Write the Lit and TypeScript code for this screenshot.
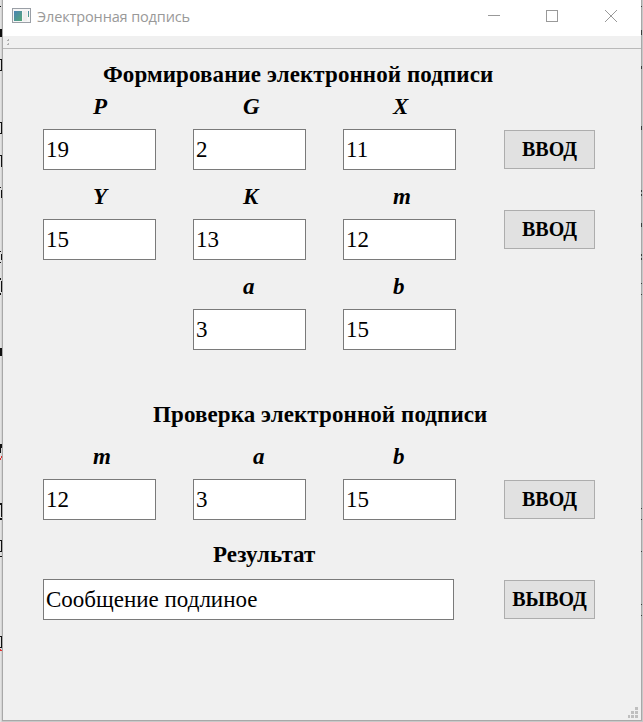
import { LitElement, html, css, svg } from "lit";
import { customElement, property } from "lit/decorators.js";

@customElement("labeled-field")
class LabeledField extends LitElement {
  @property() label = "";
  @property() value = "";

  static styles = css`
    :host { display: block; width: 113px; }
    .label {
      height: 36px; line-height: 35px; margin-bottom: 4px; padding-left: var(--indent, 50px);
      font-weight: bold; font-style: italic; font-size: 23px;
    }
    .box {
      box-sizing: border-box; height: 41px; line-height: 39px; padding-left: 2px;
      border: 1px solid #7a7a7a; background: #fff; font-size: 23px; white-space: nowrap;
    }
  `;

  render() {
    return html`<div class="label">${this.label}</div><div class="box">${this.value}</div>`;
  }
}

@customElement("push-button")
class PushButton extends LitElement {
  static styles = css`
    :host {
      box-sizing: border-box; display: flex; justify-content: center; width: 91px; height: 39px;
      border: 1px solid #adadad; background: #e1e1e1;
      font-weight: bold; font-size: 20px; line-height: 37px; white-space: nowrap;
    }
  `;
  render() {
    return html`<slot></slot>`;
  }
}

@customElement("app-root")
class AppRoot extends LitElement {
  static styles = css`
    :host {
      display: flex; box-sizing: border-box; width: 643px; height: 722px; overflow: hidden;
      background: #c8c8c8; color: #000; font-family: "Liberation Serif", "Times New Roman", serif;
    }
    svg { display: block; }
    .edge { flex: none; }
    .window {
      box-sizing: border-box; position: relative; width: 639px; height: 721px; flex: none;
      border: solid #a8a8a8; border-width: 0 0 1px 1px; background: #f0f0f0;
    }
    .titlebar {
      display: flex; align-items: center; height: 36px; background: #fff; box-sizing: border-box;
      padding: 0 24px 0 9px;
    }
    .title {
      flex: 1; margin-left: 5px; font: 14.5px/33px "Open Sans", "Noto Sans", sans-serif; color: #999;
      height: 36px; letter-spacing: -0.13px;
    }
    .appicon { margin-top: -5px; }
    .controls { margin-top: -4px; }
    .toolbar { height: 12px; border-bottom: 1px solid #b9b9b9; }
    .form { padding: 8px 0 0 40px; }
    h2 { margin: 0; height: 32px; line-height: 35px; font-size: 23px; letter-spacing: 0.1px; white-space: nowrap; }
    .h-sign { padding-left: 60px; }
    .h-check { padding-left: 110px; margin-top: 38px; height: 42px; }
    .h-result { padding-left: 170px; margin-top: 8px; height: 42px; }
    .row { display: grid; grid-template-columns: 150px 150px 161px 91px; height: 90px; }
    .third { grid-column: 2; }
    .wide-indent { --indent: 60px; }
    push-button { margin-top: 41px; }
    .raised { margin-top: 31px; }
    .result { display: grid; grid-template-columns: 461px 91px; }
    .output {
      box-sizing: border-box; width: 411px; height: 41px; line-height: 39px; padding-left: 2px;
      border: 1px solid #7a7a7a; background: #fff; font-size: 23px;
    }
    .result push-button { margin-top: 1px; }
    .grip { position: absolute; right: 3px; bottom: 2px; }
  `;

  private leftEdge() {
    return svg`
      <rect width="2" height="722" fill="#e2e2e2"/>
      <rect x="1" width="1" height="722" fill="#d4d4d4"/>
      <g fill="#111">
        <rect y="6" width="1" height="1"/><rect y="29" width="2" height="8"/>
        <rect y="59" width="2" height="1"/><rect y="70" width="2" height="1"/><rect x="1" y="59" width="1" height="12"/>
        <rect y="122" width="2" height="1"/><rect y="133" width="2" height="1"/><rect x="1" y="122" width="1" height="12"/>
        <rect y="155" width="2" height="1"/><rect x="1" y="155" width="1" height="12"/>
        <rect y="187" width="1" height="1"/><rect x="1" y="190" width="1" height="8"/>
        <rect y="251" width="1" height="1"/><rect x="1" y="254" width="1" height="6"/><rect y="262" width="1" height="1"/>
        <rect y="278" width="1" height="2"/><rect x="1" y="281" width="1" height="11"/><rect y="293" width="1" height="2"/>
        <rect y="348" width="2" height="8"/>
        <rect y="444" width="2" height="4"/><rect y="448" width="1" height="5"/>
        <rect y="503" width="2" height="2"/><rect x="1" y="505" width="1" height="12"/><rect y="518" width="2" height="2"/>
        <rect y="540" width="2" height="1"/><rect x="1" y="541" width="1" height="10"/><rect y="551" width="2" height="1"/><rect y="556" width="2" height="1"/>
        <rect y="636" width="2" height="1"/><rect x="1" y="636" width="1" height="12"/><rect y="647" width="2" height="1"/>
      </g>
      <path d="M0 459.5L2 456.5M0 649.5L2 651" stroke="#e03030" fill="none"/>`;
  }

  private rightEdge() {
    const marks = [[6, 1], [30, 5], [66, 3], [126, 4], [190, 2], [194, 2], [223, 4], [254, 2], [258, 2],
      [283, 1], [294, 1], [508, 1], [519, 1], [551, 1], [604, 1], [615, 1]];
    return svg`
      <rect width="1" height="721" fill="#a8a8a8"/>
      <rect x="1" width="1" height="722" fill="#c8c8c8"/>
      <rect y="721" width="1" height="1" fill="#c8c8c8"/>
      ${marks.map(([y, h]) => svg`<rect y=${y} width="1" height=${h} fill="#3c3c3c"/>`)}`;
  }

  render() {
    return html`
      <svg class="edge" width="2" height="722" shape-rendering="crispEdges">${this.leftEdge()}</svg>
      <div class="window">
        <div class="titlebar">
          <svg class="appicon" width="20" height="16" shape-rendering="crispEdges">
            <defs>
              <linearGradient id="g" x1="0" y1="0" x2="1" y2="1">
                <stop offset="0" stop-color="#4b83b5"/><stop offset="1" stop-color="#55a878"/>
              </linearGradient>
            </defs>
            <rect x="0.5" y="0.5" width="18" height="14" fill="#f6f6f6" stroke="#9a9fa6"/>
            <rect x="2" y="3" width="8" height="10" fill="url(#g)"/>
            <rect x="11" y="3" width="4" height="10" fill="#ededed"/>
            <rect x="16" y="3" width="1" height="6" fill="url(#g)"/>
          </svg>
          <div class="title">Электронная подпись</div>
          <svg class="controls" width="130" height="12" fill="none" stroke="#999">
            <path d="M1 5.5H13M59.5 0.5H70.5V11.5H59.5Z" shape-rendering="crispEdges"/>
            <path d="M118 0L130 12M130 0L118 12"/>
          </svg>
        </div>
        <div class="toolbar">
          <svg width="10" height="10" fill="#b0b0b0"><path d="M5 3h1v2H5zM4 4h1v1H4zM5 7h1v2H5zM4 8h1v1H4z"/></svg>
        </div>
        <div class="form">
          <h2 class="h-sign">Формирование электронной подписи</h2>
          <div class="row">
            <labeled-field label="P" value="19"></labeled-field>
            <labeled-field label="G" value="2"></labeled-field>
            <labeled-field label="X" value="11"></labeled-field>
            <push-button>ВВОД</push-button>
          </div>
          <div class="row">
            <labeled-field label="Y" value="15"></labeled-field>
            <labeled-field label="K" value="13"></labeled-field>
            <labeled-field label="m" value="12"></labeled-field>
            <push-button class="raised">ВВОД</push-button>
          </div>
          <div class="row">
            <labeled-field class="third" label="a" value="3"></labeled-field>
            <labeled-field label="b" value="15"></labeled-field>
          </div>
          <h2 class="h-check">Проверка электронной подписи</h2>
          <div class="row">
            <labeled-field label="m" value="12"></labeled-field>
            <labeled-field class="wide-indent" label="a" value="3"></labeled-field>
            <labeled-field label="b" value="15"></labeled-field>
            <push-button>ВВОД</push-button>
          </div>
          <h2 class="h-result">Результат</h2>
          <div class="result">
            <div class="output">Сообщение подлиное</div>
            <push-button>ВЫВОД</push-button>
          </div>
        </div>
        <svg class="grip" width="11" height="11" fill="#bfbfbf">
          <path d="M8 0h3v3h-3zM4 4h3v3h-3zM8 4h3v3h-3zM1 8h2v3h-2zM4 8h3v3h-3zM8 8h3v3h-3z"/>
        </svg>
      </div>
      <svg class="edge" width="2" height="722" shape-rendering="crispEdges">${this.rightEdge()}</svg>
    `;
  }
}
